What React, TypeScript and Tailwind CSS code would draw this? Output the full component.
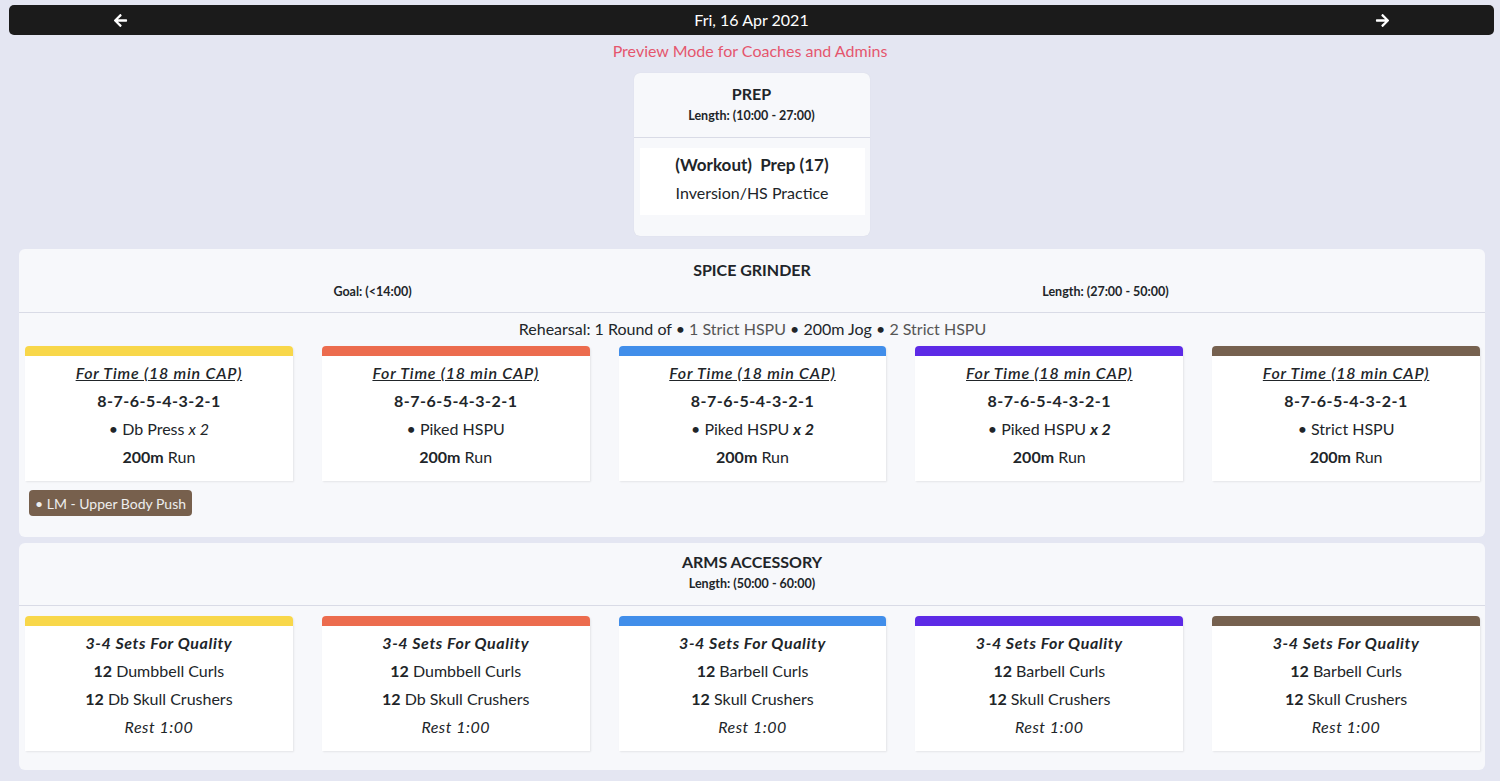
import React from "react";
import { FaArrowLeft, FaArrowRight } from "react-icons/fa";

const colors = ["bg-[#f8d74a]", "bg-[#ec6c4e]", "bg-[#418eea]", "bg-[#5d2ae6]", "bg-[#76614f]"];

function Card({ bar, children }: { bar: string; children: React.ReactNode }) {
  return (
    <div className="flex flex-col rounded-t-[4px] overflow-hidden bg-white shadow-[1px_1px_2px_rgba(0,0,0,0.08)]">
      <div className={`h-[10px] ${bar}`} />
      <div className="flex flex-col items-center pt-[3px] pb-[10px] text-center">{children}</div>
    </div>
  );
}

const Line = ({ children }: { children: React.ReactNode }) => (
  <div className="leading-[28px] h-[28px] whitespace-nowrap">{children}</div>
);

const spice = [
  { move: <>• Db Press <i>x 2</i></> },
  { move: <>• Piked HSPU</> },
  { move: <>• Piked HSPU <b><i>x 2</i></b></> },
  { move: <>• Piked HSPU <b><i>x 2</i></b></> },
  { move: <>• Strict HSPU</> },
];

const arms = [
  ["Dumbbell Curls", "Db Skull Crushers"],
  ["Dumbbell Curls", "Db Skull Crushers"],
  ["Barbell Curls", "Skull Crushers"],
  ["Barbell Curls", "Skull Crushers"],
  ["Barbell Curls", "Skull Crushers"],
];

export default function App() {
  return (
    <div
      className="min-h-[781px] bg-[#e4e6f2] text-[#212529] text-[16px]"
      style={{ fontFamily: "Lato, 'Noto Sans', sans-serif" }}
    >
      <div className="pt-[5px] pl-[9px] pr-[6px]">
        <div className="h-[30px] bg-[#1b1b1b] rounded-[5px] flex items-center justify-between px-[104px] text-white">
          <FaArrowLeft className="w-[15px] h-[15px]" />
          <span className="text-[16px]">Fri, 16 Apr 2021</span>
          <FaArrowRight className="w-[15px] h-[15px]" />
        </div>
      </div>
      <div className="text-center text-[#e5566e] leading-[22px] mt-[5px]">Preview Mode for Coaches and Admins</div>

      <div className="flex justify-center mt-[11px] pl-[3px]">
        <div className="w-[236px] bg-[#f7f8fb] rounded-[6px] pb-[21px] shadow-[0_0_1px_rgba(0,0,0,0.1)]">
          <div className="text-center pt-[9px] pb-[13px] border-b border-[#d9dbe6]">
            <div className="font-bold text-[16px] leading-[24px]">PREP</div>
            <div className="font-bold text-[12.5px] leading-[16px] mt-[2px]">Length: (10:00 - 27:00)</div>
          </div>
          <div className="ml-[6px] mr-[5px] mt-[10px] bg-white text-center pt-[3px] pb-[8px]">
            <div className="font-bold text-[17px] leading-[28px]">(Workout)&nbsp; Prep (17)</div>
            <div className="leading-[28px]">Inversion/HS Practice</div>
          </div>
        </div>
      </div>

      <div className="pr-[15px] pl-[19px] mt-[13px] flex flex-col gap-[6px]">
        <div className="bg-[#f7f8fb] rounded-[6px] pb-[21px]">
          <div className="text-center pt-[9px] pb-[12px] border-b border-[#d9dbe6]">
            <div className="font-bold text-[16px] leading-[24px]">SPICE GRINDER</div>
            <div className="grid grid-cols-2 font-bold text-[12.5px] leading-[16px] mt-[2px] -ml-[13px] mr-[13px]">
              <div>Goal: (&lt;14:00)</div>
              <div>Length: (27:00 - 50:00)</div>
            </div>
          </div>
          <div className="pl-[6px] pr-[5px]">
            <div className="text-center leading-[22px] mt-[5px] mb-[6px]">
              Rehearsal: 1 Round of • <span className="text-[#555]">1 Strict HSPU</span> • 200m Jog •{" "}
              <span className="text-[#555]">2 Strict HSPU</span>
            </div>
            <div className="grid grid-cols-5 gap-[29px]">
              {spice.map((s, i) => (
                <Card key={i} bar={colors[i]}>
                  <Line>
                    <span className="italic font-semibold underline tracking-[0.8px]">For Time (18 min CAP)</span>
                  </Line>
                  <Line>
                    <span className="font-bold tracking-[0.5px]">8-7-6-5-4-3-2-1</span>
                  </Line>
                  <Line>{s.move}</Line>
                  <Line>
                    <b>200m</b> Run
                  </Line>
                </Card>
              ))}
            </div>
            <div className="mt-[9px] ml-[4px] flex">
              <span className="inline-flex items-center h-[26px] px-[6px] rounded-[4px] bg-[#77604d] text-[#eeeeee] text-[14px]">
                • LM - Upper Body Push
              </span>
            </div>
          </div>
        </div>

        <div className="bg-[#f7f8fb] rounded-[6px] pb-[19px]">
          <div className="text-center pt-[7px] pb-[13px] border-b border-[#d9dbe6]">
            <div className="font-bold text-[16px] leading-[24px]">ARMS ACCESSORY</div>
            <div className="font-bold text-[12.5px] leading-[16px] mt-[2px]">Length: (50:00 - 60:00)</div>
          </div>
          <div className="pl-[6px] pr-[5px] pt-[10px]">
            <div className="grid grid-cols-5 gap-[29px]">
              {arms.map((a, i) => (
                <Card key={i} bar={colors[i]}>
                  <Line>
                    <span className="italic font-bold tracking-[0.6px]">3-4 Sets For Quality</span>
                  </Line>
                  <Line>
                    <b>12</b> {a[0]}
                  </Line>
                  <Line>
                    <b>12</b> {a[1]}
                  </Line>
                  <Line>
                    <i className="tracking-[0.5px]">Rest 1:00</i>
                  </Line>
                </Card>
              ))}
            </div>
          </div>
        </div>
      </div>
    </div>
  );
}
